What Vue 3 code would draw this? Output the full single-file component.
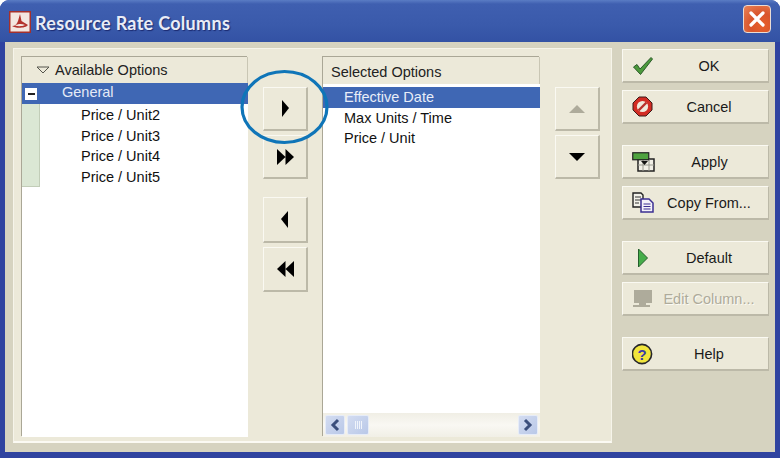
<script setup>
const rows = ['Price / Unit2', 'Price / Unit3', 'Price / Unit4', 'Price / Unit5']
const selected = ['Max Units / Time', 'Price / Unit']
</script>

<template>
  <div class="window">
    <header class="titlebar">
      <svg class="logo" width="22" height="22" viewBox="0 0 22 22">
        <rect x="0.75" y="0.75" width="20.5" height="20.5" fill="#f3e6e0" stroke="#a5302c" stroke-width="1.5" />
        <path d="M11 3 L12.5 10 L19 14 C17 17 7 18 3 15 C6 15 8 13 9 10 Z" fill="#b3322c" />
        <path d="M6 14.5 C9 12.5 13 12.5 16 14 C13 15.5 9 15.5 6 14.5 Z" fill="#f3e6e0" />
      </svg>
      <h1 class="title">Resource Rate Columns</h1>
      <div class="close">
        <svg width="18" height="18" viewBox="0 0 18 18">
          <path d="M3 3 L15 15 M15 3 L3 15" stroke="#fff" stroke-width="3.2" stroke-linecap="round" />
        </svg>
      </div>
    </header>

    <div class="client">
      <main class="panel">
        <section class="list left-list">
          <div class="list-head avail">
            <svg width="14" height="8" viewBox="0 0 14 8"><path d="M1 1 H13 L7 7 Z" fill="none" stroke="#55554c" stroke-width="1" /></svg>
            <span>Available Options</span>
          </div>
          <div class="group">
            <span class="minus"><i></i></span>
            <span class="group-name">General</span>
          </div>
          <div class="tree-body">
            <div class="strip"></div>
            <ul class="tree-rows">
              <li v-for="r in rows" :key="r">{{ r }}</li>
            </ul>
          </div>
        </section>

        <nav class="mover">
          <button class="tool">
            <svg width="12" height="18" viewBox="0 0 12 18"><path d="M3 0 L10 8 L3 17 Z" fill="#000" /></svg>
          </button>
          <button class="tool">
            <svg width="20" height="18" viewBox="0 0 20 18"><path d="M2 1 L10.5 9 L2 17 Z M10.5 1 L19 9 L10.5 17 Z" fill="#000" /></svg>
          </button>
          <button class="tool gap">
            <svg width="12" height="18" viewBox="0 0 12 18"><path d="M9 0 L2 8 L9 17 Z" fill="#000" /></svg>
          </button>
          <button class="tool last">
            <svg width="20" height="18" viewBox="0 0 20 18"><path d="M19 1 L10.5 9 L19 17 Z M10.5 1 L2 9 L10.5 17 Z" fill="#000" /></svg>
          </button>
        </nav>

        <section class="list right-list">
          <div class="list-head sel">Selected Options</div>
          <ul class="sel-rows">
            <li class="active">Effective Date</li>
            <li v-for="s in selected" :key="s">{{ s }}</li>
          </ul>
          <div class="scrollbar">
            <span class="sb-btn">
              <svg width="12" height="14" viewBox="0 0 12 14"><path d="M9 2 L4 7 L9 12" fill="none" stroke="#3c4f7c" stroke-width="3" /></svg>
            </span>
            <span class="sb-thumb"><i></i><i></i><i></i><i></i></span>
            <span class="sb-track"></span>
            <span class="sb-btn">
              <svg width="12" height="14" viewBox="0 0 12 14"><path d="M3 2 L8 7 L3 12" fill="none" stroke="#3c4f7c" stroke-width="3" /></svg>
            </span>
          </div>
        </section>

        <nav class="order">
          <button class="tool">
            <svg width="18" height="10" viewBox="0 0 18 10"><path d="M1 9 L9 1 L17 9 Z" fill="#aeab9b" /></svg>
          </button>
          <button class="tool">
            <svg width="18" height="10" viewBox="0 0 18 10"><path d="M1 1 H17 L9 9 Z" fill="#000" /></svg>
          </button>
        </nav>

        <svg class="callout" width="90" height="76" viewBox="0 0 90 76">
          <ellipse cx="44.5" cy="38" rx="42.5" ry="35.5" fill="none" stroke="#0f75b8" stroke-width="3.2" />
        </svg>
      </main>

      <aside class="actions">
        <button class="act">
          <svg class="ic" width="22" height="20" viewBox="0 0 22 20"><path d="M1.5 11 L5 8.5 L8 13 L19 1.5 L20.5 3 L8.5 18.5 Z" fill="#4c9a3c" stroke="#2c5a2a" stroke-width="1" /></svg>
          <span>OK</span>
        </button>
        <button class="act">
          <svg class="ic" width="22" height="21" viewBox="0 0 22 21"><path d="M7 1 H14 L20 7 V14 L14 20 H7 L1 14 V7 Z" fill="#d22c24" stroke="#3c1a18" stroke-width="1" /><circle cx="10.5" cy="10.5" r="5.6" fill="#efe9dc" /><path d="M6.5 14.5 L14.5 6.5" stroke="#b8302a" stroke-width="2.4" /></svg>
          <span>Cancel</span>
        </button>
        <button class="act sep">
          <svg class="ic" width="23" height="20" viewBox="0 0 23 20"><rect x="6" y="7" width="16" height="12" fill="#f1efe6" stroke="#222" stroke-width="1.5" /><path d="M6 13 H22 M11 7 V19 M17 7 V19" stroke="#9a9a90" stroke-width="1" /><rect x="0.75" y="0.75" width="16" height="7" fill="#4fa33f" stroke="#222" stroke-width="1.2" /><path d="M9 9 H16 L12.5 13 Z" fill="#111" /></svg>
          <span>Apply</span>
        </button>
        <button class="act">
          <svg class="ic" width="22" height="21" viewBox="0 0 22 21"><path d="M1 1 H9 L11 3 V15 H1 Z" fill="#f3f2ea" stroke="#222" stroke-width="1.4" /><path d="M3 5 H9 M3 8 H9 M3 11 H7" stroke="#333" stroke-width="1" /><path d="M9 7 H17 L21 11 V20 H9 Z" fill="#f4f2fa" stroke="#3b2f92" stroke-width="1.5" /><path d="M11.5 12 H18.5 M11.5 14.5 H18.5 M11.5 17 H18.5" stroke="#3b2f92" stroke-width="1" /></svg>
          <span>Copy From...</span>
        </button>
        <button class="act sep">
          <svg class="ic" width="22" height="20" viewBox="0 0 22 20"><path d="M6.5 1 L15.5 10 L6.5 19 Z" fill="#46ad4a" stroke="#245e2c" stroke-width="1" /></svg>
          <span>Default</span>
        </button>
        <button class="act disabled">
          <svg class="ic" width="22" height="18" viewBox="0 0 22 18"><rect x="2" y="0" width="18" height="13" fill="#aeab9b" /><path d="M7 13 H14 V15 H18 V17 H1 V15 H7 Z" fill="#aeab9b" /></svg>
          <span>Edit Column...</span>
        </button>
        <button class="act sep">
          <svg class="ic" width="22" height="22" viewBox="0 0 22 22"><circle cx="10" cy="11" r="9.6" fill="#f1e53c" stroke="#26262a" stroke-width="1.6" /><text x="10" y="16.5" text-anchor="middle" class="q">?</text></svg>
          <span>Help</span>
        </button>
      </aside>
    </div>
  </div>
</template>

<style scoped>
.window {
  width: 780px;
  height: 458px;
  box-sizing: border-box;
  display: flex;
  flex-direction: column;
  position: relative;
  overflow: hidden;
  background: #2f43a0;
  border-radius: 9px 9px 0 0;
  padding: 0 5px 6px;
  font-family: "Liberation Sans", Arial, sans-serif;
  font-size: 14.5px;
  color: #111;
}
.titlebar {
  height: 42px;
  margin: 0 -5px;
  padding: 0 9px;
  flex: none;
  display: flex;
  align-items: center;
  gap: 4px;
  background: linear-gradient(180deg, #5a7cc4 0, #3f5fb0 4px, #3a5aab 60%, #3352a4 100%);
}
.logo { flex: none; margin-top: 2px; }
.title {
  margin: 3px 0 0;
  flex: 1;
  color: #e9ecf6;
  font-family: Lato, sans-serif;
  font-size: 18px;
  font-weight: 700;
  letter-spacing: 0.3px;
  text-shadow: 1px 1px 1px #1b2a70;
}
.close {
  width: 28px;
  height: 28px;
  box-sizing: border-box;
  margin: -5px 0 0;
  display: flex;
  align-items: center;
  justify-content: center;
  border: 1px solid #eadcd4;
  border-radius: 4px;
  background: radial-gradient(circle at 70% 75%, #e8602c, #d9552c 45%, #e88358 100%);
}
.client {
  flex: 1;
  min-height: 0;
  display: flex;
  background: #d6d3c0;
  padding: 6px 6px 9px 8px;
}
.panel {
  width: 599px;
  flex: none;
  box-sizing: border-box;
  position: relative;
  display: flex;
  background: #ece9d9;
  border: 1px solid #f6f4ea;
  border-bottom: 2px solid #fbfaf3;
  padding: 8px 0 4px 8px;
}
.list {
  background: #fff;
  display: flex;
  flex-direction: column;
  box-shadow: -1px -1px 0 #aaa796;
}
.left-list { width: 226px; }
.right-list { width: 217px; }
.list-head {
  background: #ece9d9;
  border-right: 1px solid #c9c6b4;
  box-sizing: border-box;
}
.avail {
  height: 26px;
  display: flex;
  align-items: center;
  gap: 5px;
  padding-left: 14px;
  color: #222;
}
.group {
  height: 21px;
  background: #3f67b4;
  display: flex;
  align-items: center;
  color: #e4eaf6;
}
.minus {
  width: 12px;
  height: 12px;
  margin-left: 3px;
  background: #fff;
  display: flex;
  align-items: center;
  justify-content: center;
}
.minus i { width: 7px; height: 2px; background: #222; }
.group-name { margin: -3px 0 0 25px; }
.tree-body { flex: 1; display: flex; align-items: flex-start; }
.strip {
  width: 18px;
  height: 83px;
  background: #dbe7d4;
  border-right: 1px solid #c2cdb8;
  border-bottom: 1px solid #c2cdb8;
  box-sizing: border-box;
}
.tree-rows { list-style: none; margin: 0; padding: 1px 0 0 41px; }
.tree-rows li { height: 20.5px; line-height: 20.5px; }
.mover {
  width: 75px;
  flex: none;
  box-sizing: border-box;
  padding: 30px 0 0 15px;
  display: flex;
  flex-direction: column;
  gap: 4px;
}
.tool {
  width: 45px;
  height: 44px;
  box-sizing: border-box;
  padding: 0;
  flex: none;
  display: flex;
  align-items: center;
  justify-content: center;
  background: #ece9d9;
  border: 1px solid #faf9f2;
  border-right: 2px solid #bcb9a8;
  border-bottom: 2px solid #bcb9a8;
}
.gap { margin-top: 14px; height: 46px; }
.last { height: 45px; }
.sel {
  height: 27px;
  line-height: 31px;
  padding-left: 8px;
  color: #222;
}
.sel-rows { list-style: none; margin: 3px 0 0; padding: 0; flex: 1; }
.sel-rows li { height: 20.5px; line-height: 21.5px; padding-left: 21px; }
.sel-rows .active { background: #3f67b4; color: #e8edf8; }
.scrollbar {
  height: 24px;
  box-sizing: border-box;
  padding: 2px;
  display: flex;
  gap: 2px;
  background: linear-gradient(180deg, #f0eee5, #f9f8f3 50%, #f1efe6);
}
.sb-btn, .sb-thumb {
  width: 20px;
  display: flex;
  align-items: center;
  justify-content: center;
  box-sizing: border-box;
  border-radius: 2px;
  border: 1px solid #e6ecf8;
  background: linear-gradient(135deg, #d3dcf1, #b9c8e8);
}
.sb-thumb { width: 22px; gap: 1px; }
.sb-thumb i { width: 1px; height: 8px; background: #f0f4fb; }
.sb-track { flex: 1; }
.order {
  width: 45px;
  flex: none;
  margin-left: 15px;
  padding-top: 30px;
  display: flex;
  flex-direction: column;
  gap: 4px;
}
.callout {
  position: absolute;
  left: 226px;
  top: 20px;
  pointer-events: none;
}
.actions {
  width: 147px;
  margin-left: 10px;
  padding-top: 1px;
  display: flex;
  flex-direction: column;
  gap: 7px;
}
.act {
  height: 34px;
  flex: none;
  box-sizing: border-box;
  padding: 0 0 0 9px;
  display: flex;
  align-items: center;
  background: #ece9d9;
  border: 1px solid #faf9f2;
  border-right: 1px solid #bcb9a8;
  border-bottom: 2px solid #bcb9a8;
  font: inherit;
  color: #1a1a1a;
}
.act .ic { flex: none; margin-right: -4px; }
.act span { flex: 1; text-align: center; }
.sep { margin-top: 14px; }
.disabled { color: #aeab9b; text-shadow: 1px 1px 0 #fbfaf3; }
.q {
  font-family: "Liberation Sans", sans-serif;
  font-size: 15px;
  font-weight: 700;
  fill: #3c3ca8;
}
</style>

<style>
html, body { background: #fff; }
</style>
